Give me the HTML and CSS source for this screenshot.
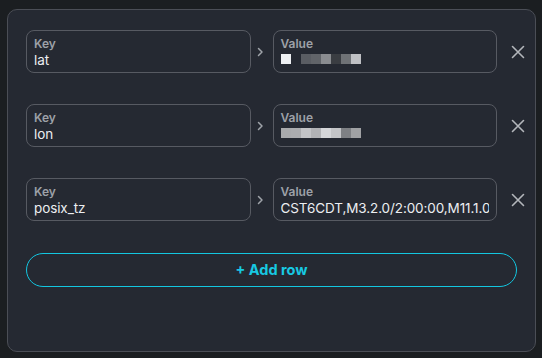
FILE: index.html
```html
<!DOCTYPE html>
<html>
<head>
<meta charset="utf-8">
<link rel="stylesheet" href="styles.css">
</head>
<body>
<div class="panel">
  <div class="rows">
    <div class="row">
      <div class="field"><div class="label">Key</div><div class="val">lat</div></div>
      <div class="arrow"><svg width="8" height="12" viewBox="0 0 8 12"><path d="M2.5 2.5l3.5 3.5-3.5 3.5" fill="none" stroke="#9fa3a9" stroke-width="1.5" stroke-linecap="round" stroke-linejoin="round"/></svg></div>
      <div class="field"><div class="label">Value</div>
        <div class="val pix">
          <span class="px" style="background:#eef0f3"></span><span class="px gap"></span><span class="px" style="background:#5a5d63"></span><span class="px" style="background:#616469"></span><span class="px" style="background:#8a8c90"></span><span class="px" style="background:#3a3d42"></span><span class="px" style="background:#6f7276"></span><span class="px" style="background:#bfc0c4"></span>
        </div>
      </div>
      <button class="del"><svg width="14" height="14" viewBox="0 0 14 14"><path d="M1.5 1.5l11 11M12.5 1.5l-11 11" stroke="#b3b6bb" stroke-width="1.6" stroke-linecap="round"/></svg></button>
    </div>
    <div class="row">
      <div class="field"><div class="label">Key</div><div class="val">lon</div></div>
      <div class="arrow"><svg width="8" height="12" viewBox="0 0 8 12"><path d="M2.5 2.5l3.5 3.5-3.5 3.5" fill="none" stroke="#9fa3a9" stroke-width="1.5" stroke-linecap="round" stroke-linejoin="round"/></svg></div>
      <div class="field"><div class="label">Value</div>
        <div class="val pix">
          <span class="px" style="background:#a9aaad"></span><span class="px" style="background:#abacaf"></span><span class="px" style="background:#c3c4c7"></span><span class="px" style="background:#b2b3b6"></span><span class="px" style="background:#d5d6d9"></span><span class="px" style="background:#c4c5c8"></span><span class="px" style="background:#7e8084"></span><span class="px" style="background:#a0a1a4"></span>
        </div>
      </div>
      <button class="del"><svg width="14" height="14" viewBox="0 0 14 14"><path d="M1.5 1.5l11 11M12.5 1.5l-11 11" stroke="#b3b6bb" stroke-width="1.6" stroke-linecap="round"/></svg></button>
    </div>
    <div class="row">
      <div class="field"><div class="label">Key</div><div class="val">posix_tz</div></div>
      <div class="arrow"><svg width="8" height="12" viewBox="0 0 8 12"><path d="M2.5 2.5l3.5 3.5-3.5 3.5" fill="none" stroke="#9fa3a9" stroke-width="1.5" stroke-linecap="round" stroke-linejoin="round"/></svg></div>
      <div class="field"><div class="label">Value</div><div class="val">CST6CDT,M3.2.0/2:00:00,M11.1.0/2:00:00</div></div>
      <button class="del"><svg width="14" height="14" viewBox="0 0 14 14"><path d="M1.5 1.5l11 11M12.5 1.5l-11 11" stroke="#b3b6bb" stroke-width="1.6" stroke-linecap="round"/></svg></button>
    </div>
  </div>
  <button class="add">+ Add row</button>
</div>
</body>
</html>
```

FILE: styles.css
```css
html, body {
  margin: 0;
  background: #1b1e21;
}
body {
  padding: 9px 7px;
  font-family: Inter, "Noto Sans", sans-serif;
}
.panel {
  box-sizing: border-box;
  width: 529px;
  height: 343px;
  background: #252932;
  border: 1px solid #4b4e56;
  border-radius: 10px;
  padding: 20px 18px;
}
.rows {
  display: flex;
  flex-direction: column;
  gap: 31px;
  margin-right: -12px;
}
.row {
  display: grid;
  grid-template-columns: 1fr 22px 1fr 32px;
  align-items: center;
  height: 43px;
}
.field {
  box-sizing: border-box;
  height: 43px;
  border: 1px solid #575a62;
  border-radius: 8px;
  padding: 5px 7px 0;
  overflow: hidden;
  min-width: 0;
}
.label {
  font-size: 12px;
  line-height: 15px;
  font-weight: 600;
  color: #9da1a8;
}
.val {
  font-size: 13.5px;
  line-height: 19px;
  color: #eceef1;
  white-space: nowrap;
  overflow: hidden;
  letter-spacing: -0.1px;
}
.pix {
  display: flex;
  align-items: flex-start;
  padding-top: 3px;
  box-sizing: border-box;
  height: 19px;
}
.px {
  width: 10px;
  height: 10px;
}
.px.gap { width: 10px; }
.arrow {
  display: flex;
  justify-content: center;
  align-items: center;
  padding-right: 3px;
}
.del {
  justify-self: end;
  width: 22px;
  height: 22px;
  padding: 0;
  border: 0;
  background: none;
  display: flex;
  justify-content: center;
  align-items: center;
}
.add {
  display: block;
  box-sizing: border-box;
  width: 100%;
  height: 34px;
  margin-top: 32px;
  border: 1.5px solid #13c6e0;
  border-radius: 17px;
  background: transparent;
  color: #17c9e3;
  font-family: Inter, "Noto Sans", sans-serif;
  font-size: 14.5px;
  font-weight: 700;
  padding: 0 0 2px;
}
```
